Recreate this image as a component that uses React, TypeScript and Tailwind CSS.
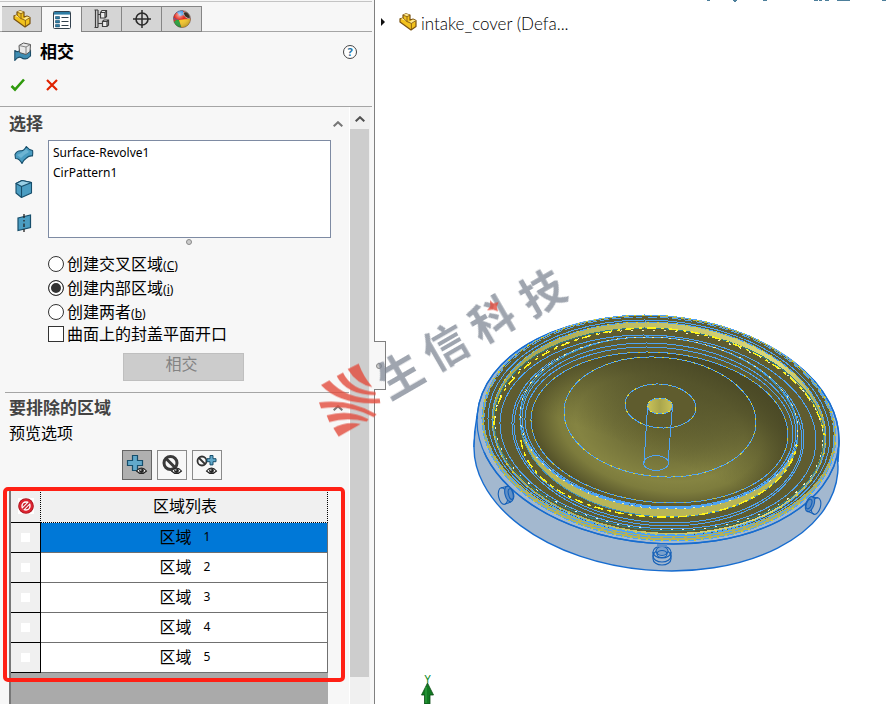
import React, { useState } from "react";

type IconProps = { className?: string };

const PartIcon = ({ className = "h-[18px] w-[18px]" }: IconProps) => (
  <svg viewBox="0 0 18 18" className={className} aria-hidden="true">
    <path d="M4 5 L4 2 L7 0.8 L11 2 L11 7 L14 6 L17 7.5 L17 13.5 L12 17 L1 9 L1 5.8 Z" fill="#f2c21d" stroke="#7a5210" strokeWidth="1.2" strokeLinejoin="round" />
    <path d="M4 2 L7 0.8 L11 2 L8 3.4 Z M10 9 L14 6.4 L17 7.6 L12.6 10.4 Z M1.5 6 L4 5 L8 8 Z" fill="#ffe98e" />
    <path d="M4 2.2 L8 3.6 L8 8.6 L10 9.4 L12.4 10.4 L12.4 16 M8 3.6 L11 2.2 M12.4 10.4 L16.6 7.8 M4 5 L8 8.6" fill="none" stroke="#7a5210" strokeWidth="0.8" />
  </svg>
);

const ListIcon = () => (
  <svg viewBox="0 0 18 18" className="h-[18px] w-[18px]" aria-hidden="true">
    <rect x="0.5" y="0.5" width="17" height="17" rx="1" fill="#fff" stroke="#33424e" />
    <path d="M1 1h16v2.6H1z" fill="#2e7da5" />
    <path d="M2.5 5.5h4v2.4h-4zM2.5 9.5h4v2.4h-4zM2.5 13.5h4v2.4h-4z" fill="#2e7da5" stroke="#1e4e69" strokeWidth="0.6" />
    <path d="M8.5 6.5h7M8.5 10.5h7M8.5 14.5h7" stroke="#33424e" strokeWidth="1.2" />
  </svg>
);

const TreeIcon = () => (
  <svg viewBox="0 0 18 20" className="h-5 w-[18px]" fill="none" stroke="#3f3f3f" strokeWidth="1.2" aria-hidden="true">
    <path d="M2.5 1 V18.5 M5 1 V18.5 M5 5.5 H8 M5 14.5 H9 M1.5 1 H5 M1.5 18.5 H5" />
    <path d="M7.5 3.5 L9 1.5 H13.5 V7.5 L12 9 H7.5 Z M7.5 3.5 H12 V9 M12 3.5 L13.5 1.5" fill="#eee" />
    <path d="M9.5 12.5 L11 11 H15.5 V16 L14 17.5 H9.5 Z M9.5 12.5 H14 V17.5 M14 12.5 L15.5 11" fill="#eee" />
  </svg>
);

const TargetIcon = () => (
  <svg viewBox="0 0 18 18" className="h-[18px] w-[18px]" fill="none" stroke="#2b2b2b" aria-hidden="true">
    <circle cx="9" cy="9" r="6" strokeWidth="1.6" />
    <path d="M9 0V18M0 9H18" strokeWidth="1.5" />
  </svg>
);

const AppearanceIcon = () => (
  <svg viewBox="0 0 18 18" className="h-[18px] w-[18px]" aria-hidden="true">
    <defs>
      <radialGradient id="gloss" cx="0.35" cy="0.25" r="0.8">
        <stop offset="0" stopColor="#fff" stopOpacity="0.65" />
        <stop offset="0.4" stopColor="#fff" stopOpacity="0" />
        <stop offset="1" stopColor="#000" stopOpacity="0.25" />
      </radialGradient>
    </defs>
    <circle cx="9" cy="9" r="8.6" fill="#e42a1d" />
    <path d="M0.4 9 A8.6 8.6 0 0 1 8 0.5 Q5 5 6 10 Z" fill="#2d6fd8" />
    <path d="M1 12 Q3 9 6 10 L8.5 17.5 A8.6 8.6 0 0 1 1 12Z" fill="#28a13c" />
    <path d="M6 10 Q12 9 17.6 9 A8.6 8.6 0 0 1 8.5 17.5 Z" fill="#f5c72b" />
    <path d="M6 10 L0.6 8 Q1 4 4 2 Q6 5 10 7 Z" fill="#e42a1d" />
    <path d="M4 2 A8.6 8.6 0 0 1 10 0.5 L11 5 L7 6 Z" fill="#2f8ae0" />
    <path d="M10 3 Q12 1 14 2 Q17.5 5 17.5 8 L15 8.5 Q11 7 10 3Z" fill="#35291d" stroke="#eee" strokeWidth="0.6" />
    <circle cx="9" cy="9" r="8.6" fill="url(#gloss)" stroke="#555" strokeWidth="0.4" />
  </svg>
);

const IntersectIcon = () => (
  <svg viewBox="0 0 18 20" className="h-5 w-[18px]" strokeLinejoin="round" aria-hidden="true">
    <path d="M0.8 8.5 Q4 11 6 8 L6 7 L16.5 8 V14 Q12 19 7 15.500 Q4 14 0.8 18.5Z" fill="#3f8db3" stroke="#1c4e69" strokeWidth="1.1" />
    <path d="M5 3.5 L9.5 1 L16.500 2.5 L16 9.5 L12 12.5 L5.5 10.5 Z" fill="#e9e9e9" stroke="#555" strokeWidth="1" />
    <path d="M5 3.5 L12 5 L16.500 2.5 M12 5 V12.5" fill="none" stroke="#777" strokeWidth="0.9" />
  </svg>
);

const SurfaceIcon = () => (
  <svg viewBox="0 0 20 20" className="h-5 w-5" aria-hidden="true">
    <path d="M1 9.5 Q3 5.500 7 5.800 Q10 6 12.3 1.5 Q15 5 18.6 5.5 Q19 8.5 18.5 11 Q15 10.500 12.500 13 Q9.500 15 8 18.5 Q5.5 13.5 1.5 13.5 Z" fill="#4b9dc2" stroke="#174e6b" strokeWidth="1.1" strokeLinejoin="round" />
    <path d="M3 10 Q8 8 12 4 L15 7 Q11 9 7 13 Z" fill="#83c3de" opacity="0.6" />
  </svg>
);

const BodyIcon = () => (
  <svg viewBox="0 0 20 20" className="h-5 w-5" stroke="#174e6b" strokeWidth="1.1" strokeLinejoin="round" aria-hidden="true">
    <path d="M2 4.5 L8 1.5 L17.5 3.5 V14 L7.5 18.5 L2 14Z" fill="#4b9dc2" />
    <path d="M2 4.5 L8 1.5 L17.5 3.5 L7.5 7.5Z" fill="#9ad0e6" />
    <path d="M7.5 7.5 V18.5" />
  </svg>
);

const PlaneIcon = () => (
  <svg viewBox="0 0 20 20" className="h-5 w-5" aria-hidden="true">
    <path d="M4 5 L16.5 2 V14.5 L4 17.5Z" fill="#4b9dc2" stroke="#174e6b" strokeWidth="1.2" />
    <path d="M10 1V5M10 7V8.5M10 10.5V14M10 16V19" stroke="#222" strokeWidth="1.3" />
  </svg>
);

const Eye = ({ x, y }: { x: number; y: number }) => (
  <g transform={`translate(${x} ${y})`}>
    <path d="M0.5 4 Q5.5 -2 10.5 4 Q5.5 9 0.5 4Z" fill="#fff" stroke="#222" strokeWidth="1.1" />
    <circle cx="5.5" cy="3.7" r="2.4" fill="#222" />
    <circle cx="4.8" cy="3" r="0.7" fill="#fff" />
  </g>
);

const PlusEyeIcon = () => (
  <svg viewBox="0 0 22 22" className="h-[22px] w-[22px]" aria-hidden="true">
    <path d="M6.5 1.5h5v5h5v5h-5v5h-5v-5h-5v-5h5z" fill="#62a9cb" stroke="#174e6b" strokeWidth="1.2" />
    <Eye x={10} y={13} />
  </svg>
);

const BlockEyeIcon = () => (
  <svg viewBox="0 0 22 22" className="h-[22px] w-[22px]" aria-hidden="true">
    <circle cx="9.5" cy="9" r="6.5" fill="none" stroke="#3a3a3a" strokeWidth="3" />
    <path d="M5 4.5L14 13.5" stroke="#3a3a3a" strokeWidth="3" />
    <Eye x={10} y={13} />
  </svg>
);

const BothEyeIcon = () => (
  <svg viewBox="0 0 22 22" className="h-[22px] w-[22px]" aria-hidden="true">
    <circle cx="6" cy="7" r="4.5" fill="none" stroke="#333" strokeWidth="1.8" />
    <path d="M3 4L9 10" stroke="#333" strokeWidth="1.8" />
    <path d="M14 1.5h3v3.200h3v3h-3v3.200h-3v-3.200h-3v-3h3z" fill="#62a9cb" stroke="#174e6b" strokeWidth="1" />
    <Eye x={10} y={13} />
  </svg>
);

const ForbidIcon = () => (
  <svg viewBox="0 0 16 16" className="h-4 w-4 bg-white" aria-hidden="true">
    <circle cx="8" cy="8" r="7.8" fill="#a5121b" />
    <circle cx="8" cy="8" r="7" fill="#dc2430" />
    <circle cx="8" cy="8" r="4.700" fill="#fff" />
    <circle cx="8" cy="8" r="3.300" fill="#c81e29" />
    <path d="M4.800 11.200L11.200 4.800" stroke="#fff" strokeWidth="3.600" />
    <path d="M4.500 11.500L11.500 4.500" stroke="#c81e29" strokeWidth="1.600" />
  </svg>
);

const Caret = ({ color = "#777" }: { color?: string }) => (
  <svg viewBox="0 0 10 6" className="h-[6px] w-[10px]" aria-hidden="true">
    <path d="M0.700 5.300L5 1.200L9.300 5.300" fill="none" stroke={color} strokeWidth="2" />
  </svg>
);

const TILT = 5;

/** Ellipse described by the edges of its bounding box, with the common tilt of the model. */
function Ring({
  box,
  ...rest
}: { box: [number, number, number, number] } & React.SVGProps<SVGEllipseElement>) {
  const [left, right, top, bottom] = box;
  const cx = (left + right) / 2;
  const cy = (top + bottom) / 2;
  const w = ((right - left) / 2) ** 2;
  const h = ((bottom - top) / 2) ** 2;
  const c = Math.cos((TILT * Math.PI) / 180) ** 2;
  const s = 1 - c;
  const rx = Math.sqrt((w * c - h * s) / (c - s));
  const ry = Math.sqrt((h * c - w * s) / (c - s));
  return <ellipse cx={cx} cy={cy} rx={rx} ry={ry} transform={`rotate(${TILT} ${cx} ${cy})`} {...rest} />;
}

const EDGE = "#4da3f5";

function Model() {
  return (
    <svg viewBox="375 0 511 704" preserveAspectRatio="xMinYMin meet" className="absolute inset-0 h-full w-full" fill="none" role="img" aria-label="intake_cover">
      <defs>
        <radialGradient id="dish" gradientUnits="userSpaceOnUse" cx="0" cy="0" r="1" gradientTransform="translate(660 428) rotate(6) scale(131 80)">
          <stop offset="0" stopColor="#6b6932" />
          <stop offset="0.35" stopColor="#74733a" />
          <stop offset="0.65" stopColor="#858442" />
          <stop offset="0.78" stopColor="#7d7c3d" />
          <stop offset="1" stopColor="#56542a" />
        </radialGradient>
        <linearGradient id="shade" gradientUnits="userSpaceOnUse" x1="685" y1="350" x2="655" y2="455">
          <stop offset="0" stopColor="#4a4926" />
          <stop offset="0.35" stopColor="#4a4926" stopOpacity="0.75" />
          <stop offset="1" stopColor="#4a4926" stopOpacity="0" />
        </linearGradient>
        <linearGradient id="lip" x1="0" x2="1">
          <stop offset="0" stopColor="#a5a24a" />
          <stop offset="0.5" stopColor="#c6c36a" />
          <stop offset="0.85" stopColor="#dcd97c" />
          <stop offset="1" stopColor="#a5a24a" />
        </linearGradient>
        <linearGradient id="hub" x1="0" x2="1">
          <stop offset="0" stopColor="#c9c25a" />
          <stop offset="0.5" stopColor="#aaa64c" />
          <stop offset="1" stopColor="#c9c25a" />
        </linearGradient>
      </defs>

      <path d="M707 0h3M733 0h4M734 1h2M763 0h4M814 0h4M819 0h3M825 0h4M837 0h13M882 0h4" stroke="#4d7f9b" strokeWidth="2" />

      <Ring box={[474, 838, 343, 571]} fill="#a3b8cf" stroke="#176ccf" strokeWidth="1.4" />
      <Ring box={[477, 839, 316, 544]} fill="#a3b8cf" stroke="#176ccf" strokeWidth="1.4" />
      <path d="M477 419L474 446L480 452L835 452L838 446L839 440Z" fill="#a3b8cf" />
      <path d="M477 416Q474 432 474 447M839 440Q839 450 838 462" stroke="#176ccf" strokeWidth="1.4" />
      <Ring box={[477, 839, 316, 544]} stroke="#176ccf" strokeWidth="1.2" />

      <g shapeRendering="crispEdges">
        <Ring box={[482, 836, 315, 541]} fill="#b4b158" />
        <Ring box={[484, 834, 316, 536]} fill="#5f5c30" />
        <Ring box={[482, 836, 315, 541]} stroke={EDGE} strokeWidth="1" />
        <Ring box={[482, 836, 315, 541]} stroke="#d0ce2a" strokeWidth="1" strokeDasharray="2 6" />
        <Ring box={[484, 834, 317, 538]} stroke={EDGE} strokeWidth="1" strokeDasharray="9 3" />
        <Ring box={[488, 830, 320, 536]} stroke={EDGE} strokeWidth="1" />

        <Ring box={[492, 826, 322, 535]} fill="url(#lip)" />
        <Ring box={[494, 823, 328, 533]} fill="#5f5c30" />
        <Ring box={[492, 826, 322, 535]} stroke={EDGE} strokeWidth="1" />
        <Ring box={[492, 826, 322, 535]} stroke="#d5d33c" strokeWidth="1" strokeDasharray="2 8" />
        <Ring box={[494, 824, 328, 531]} stroke="#2c7c8a" strokeWidth="1" />
        <path d="M494 425C496 365 575 328 650 328C740 329 817 380 824 435" stroke="#fff41a" strokeWidth="1.500" strokeDasharray="9 5 3 5" />
        <Ring box={[495, 823, 330, 530]} stroke="#f3f2c9" strokeWidth="1" strokeDasharray="2 9" />
        <Ring box={[500, 816, 335, 529]} stroke={EDGE} strokeWidth="1" />
        <Ring box={[512, 804, 337, 526]} stroke={EDGE} strokeWidth="1" />
        <Ring box={[514, 802, 342, 523]} stroke={EDGE} strokeWidth="1" />

        <Ring box={[520, 798, 337, 517]} fill="#b8b558" />
        <Ring box={[519, 799, 336, 509]} fill="#5f5c30" />
        <Ring box={[520, 798, 337, 517]} stroke="#3f95c0" strokeWidth="1" />
        <path d="M521 440C526 485 590 516 660 517C736 519 790 485 797 445" stroke="#fff41a" strokeWidth="1.5" strokeDasharray="9 4 4 4" />
        <Ring box={[520, 798, 337, 509]} stroke={EDGE} strokeWidth="1" />
        <Ring box={[520, 798, 337, 509]} stroke="#f3f2ae" strokeWidth="1" strokeDasharray="2 7" />
        <Ring box={[522, 796, 343, 508]} stroke={EDGE} strokeWidth="1" />
        <Ring box={[525, 793, 347, 507]} stroke={EDGE} strokeWidth="1" />
      </g>

      <Ring box={[531, 788, 352, 503]} fill="url(#dish)" />
      <Ring box={[531, 788, 352, 503]} fill="url(#shade)" />
      <g shapeRendering="crispEdges">
        <Ring box={[531, 788, 352, 503]} stroke={EDGE} strokeWidth="1" />
        <Ring box={[531, 788, 352, 503]} stroke="#c6c43a" strokeWidth="1" strokeDasharray="2 8" />
        <Ring box={[564, 756, 357, 477]} stroke={EDGE} strokeWidth="1" />
        <Ring box={[564, 756, 357, 477]} stroke="#d5d33c" strokeWidth="1" strokeDasharray="2 6" />
        <Ring box={[625, 696, 384, 428]} fill="#5f5c2e" stroke={EDGE} strokeWidth="1" />
        <Ring box={[625, 696, 384, 428]} stroke="#d5d33c" strokeWidth="1" strokeDasharray="2 7" />
        <ellipse cx="660" cy="406" rx="12.500" ry="8" fill="url(#hub)" stroke={EDGE} />
        <ellipse cx="660" cy="406" rx="12.500" ry="8" stroke="#f0ee30" strokeDasharray="2 4" />
        <path d="M647.500 407L644 463M672.500 406L668 463" stroke={EDGE} />
        <ellipse cx="656" cy="463" rx="12.500" ry="7.500" stroke={EDGE} />
      </g>

      <g stroke="#1560b8" strokeWidth="1.1">
        <ellipse cx="503" cy="496" rx="4.500" ry="8.500" transform="rotate(-12 503 496)" />
        <ellipse cx="509" cy="494" rx="4" ry="8" fill="#5f8fc6" transform="rotate(-14 509 494)" />
        <ellipse cx="511" cy="494" rx="2.500" ry="5.500" transform="rotate(-14 511 494)" />
        <path d="M501 488L508 486M505 504L511 502" />
        <ellipse cx="816" cy="506" rx="4.500" ry="8.500" transform="rotate(14 816 506)" />
        <ellipse cx="810" cy="504" rx="4" ry="8" fill="#5f8fc6" transform="rotate(20 810 504)" />
        <ellipse cx="809" cy="504" rx="2.500" ry="5" transform="rotate(20 809 504)" />
        <path d="M812 497L818 498M807 511L814 514" />
        <path d="M653 552V559A9 6 0 0 0 671 559V552" />
        <ellipse cx="662" cy="552" rx="9" ry="6" />
        <ellipse cx="662" cy="556" rx="9" ry="6" />
        <ellipse cx="662" cy="551" rx="6" ry="4.500" fill="#7ba1cc" />
        <ellipse cx="662" cy="554" rx="5" ry="3.500" />
        <path d="M657 544H667V547H657Z" fill="#5f8fc6" stroke="none" />
      </g>

      <path d="M427.500 683L433.500 695H430V704H424.500V695H421.500Z" fill="#127a22" stroke="#0b4d14" strokeWidth="0.800" />
      <path d="M426 687V703" stroke="#35a845" />
      <text x="427.500" y="683" textAnchor="middle" fontSize="11" className="fill-[#0f8a1f] font-['Noto_Sans',sans-serif]">Y</text>
    </svg>
  );
}

function Watermark() {
  const glyphs: [string, number, number][] = [
    ["生", 270, 374],
    ["信", 406, 290],
    ["科", 546, 208],
    ["技", 697, 128],
  ];
  return (
    <svg viewBox="0 0 810 600" className="pointer-events-none absolute left-[310px] top-[250px] h-[200px] w-[270px]" aria-hidden="true">
      <g className="fill-[#7f8794] font-['Noto_Sans_CJK_SC',sans-serif] font-bold" opacity="0.75" fontSize="132">
        {glyphs.map(([ch, x, y]) => (
          <text key={ch} textAnchor="middle" dy="50" transform={`translate(${x} ${y}) rotate(-30)`}>
            {ch}
          </text>
        ))}
      </g>
      <g fill="#e34c3c" opacity="0.8">
        <path d="M113 357L146 341Q160 380 187 411Q140 402 113 357Z" />
        <path d="M80 378L99 368Q125 422 197 426V435Q110 435 80 378Z" />
        <path d="M33 405L58 391Q110 450 209 446L211 459Q90 466 33 405Z" />
        <path d="M27 457Q120 445 200 493L191 501Q120 462 33 475Z" />
        <path d="M50 496Q120 476 176 508L170 515Q110 500 58 516Z" />
        <path d="M70 534Q110 512 152 522L86 560Z" />
        <path d="M540 151L550 160L566 156L560 170L564 184L549 179L531 181L541 169Z" />
      </g>
    </svg>
  );
}

const tabs = [
  { label: "FeatureManager", icon: <PartIcon /> },
  { label: "PropertyManager", icon: <ListIcon /> },
  { label: "ConfigurationManager", icon: <TreeIcon /> },
  { label: "DimXpertManager", icon: <TargetIcon /> },
  { label: "DisplayManager", icon: <AppearanceIcon /> },
];

const modes = [
  { id: "cross", text: "创建交叉区域", hotkey: "C" },
  { id: "inner", text: "创建内部区域", hotkey: "i" },
  { id: "both", text: "创建两者", hotkey: "b" },
];

const previews = [
  { label: "显示包含的区域", icon: <PlusEyeIcon /> },
  { label: "显示排除的区域", icon: <BlockEyeIcon /> },
  { label: "显示两者", icon: <BothEyeIcon /> },
];

export default function App() {
  const [tab, setTab] = useState(1);
  const [mode, setMode] = useState("inner");
  const [preview, setPreview] = useState(0);
  const [row, setRow] = useState(1);

  return (
    <div className="relative flex h-screen overflow-hidden bg-white font-['Noto_Sans','Noto_Sans_CJK_SC',sans-serif] text-base text-black">
      <aside className="flex w-[375px] shrink-0 flex-col border-r border-[#808080] bg-[#f7f7f7]">
        <div className="mr-[2px] h-[2px] shrink-0 border-b border-[#c4c4c4]" />
        <div className="mr-[2px] flex h-[30px] shrink-0 items-end">
          <span className="h-full w-[2px] border-b border-[#a5a5a5]" />
          {tabs.map((t, i) => (
            <button
              key={t.label}
              aria-label={t.label}
              onClick={() => setTab(i)}
              className={`flex h-[26px] w-10 items-center justify-center border-t border-r border-[#858585] ${
                i === tab ? "bg-[#f7f7f7]" : "border-b bg-[#d5d5d5]"
              }`}
            >
              {t.icon}
            </button>
          ))}
          <span className="h-full flex-1 border-b border-[#a5a5a5]" />
        </div>

        <header className="mr-[2px] h-[75px] shrink-0 border-b border-[#a5a5a5]">
          <div className="flex h-10 items-center pl-[14px] pr-[15px]">
            <IntersectIcon />
            <h1 className="ml-2 flex-1 text-[17px] leading-5 font-bold">相交</h1>
            <button aria-label="帮助" className="flex h-[14px] w-[14px] items-center justify-center rounded-full border border-[#444] bg-white text-[11px] leading-3 font-bold text-[#1f74a5]">
              ?
            </button>
          </div>
          <div className="flex h-[26px] items-center gap-5 pl-[10px]">
            <button aria-label="确定">
              <svg viewBox="0 0 16 14" className="h-[14px] w-4">
                <path d="M1.500 8L5 11.500L14 1.500" fill="none" stroke="#2f9a0c" strokeWidth="2.600" />
              </svg>
            </button>
            <button aria-label="取消">
              <svg viewBox="0 0 12 12" className="h-3 w-3">
                <path d="M1 1L11 11M11 1L1 11" fill="none" stroke="#e02300" strokeWidth="2.200" />
              </svg>
            </button>
          </div>
        </header>

        <div className="flex min-h-0 flex-1">
          <div className="min-w-0 flex-1 overflow-hidden">
            <section>
              <button className="flex h-[33px] w-full items-center justify-between pl-[9px] pr-[6px]">
                <span className="text-[17px] leading-5 font-bold text-[#444]">选择</span>
                <Caret />
              </button>
              <div className="flex pr-[18px]">
                <div className="flex w-12 flex-col items-center gap-[14px] pt-[5px]">
                  <SurfaceIcon />
                  <BodyIcon />
                  <PlaneIcon />
                </div>
                <ul role="listbox" aria-label="选择" className="h-[98px] flex-1 border border-[#7e8ba3] bg-white px-1 py-[2px] text-xs leading-5">
                  <li role="option" aria-selected="false">Surface-Revolve1</li>
                  <li role="option" aria-selected="false">CirPattern1</li>
                </ul>
              </div>
              <div className="flex h-2 items-center justify-center pl-[28px]">
                <span className="h-[6px] w-[6px] rounded-full border border-[#8a8a8a] bg-[#ccc]" />
              </div>
              <div className="pt-[6px] pl-12">
                {modes.map((m) => (
                  <label key={m.id} className="flex h-6 items-center">
                    <input
                      type="radio"
                      name="mode"
                      checked={mode === m.id}
                      onChange={() => setMode(m.id)}
                      className="mr-[3px] h-4 w-4 appearance-none rounded-full border border-[#333] bg-white checked:bg-[#333] checked:shadow-[inset_0_0_0_2px_white]"
                    />
                    <span className="leading-6">
                      {m.text}
                      <span className="text-xs">
                        (<u>{m.hotkey}</u>)
                      </span>
                    </span>
                  </label>
                ))}
                <label className="flex h-5 items-center">
                  <input type="checkbox" className="mr-[3px] h-4 w-4 appearance-none border border-[#333] bg-white checked:bg-[#333]" />
                  <span className="leading-5">曲面上的封盖平面开口</span>
                </label>
              </div>
              <button disabled className="mt-[9px] ml-[123px] flex h-7 w-[121px] justify-center border border-[#bfbfbf] bg-[#ccc] pr-1 leading-5 text-[#838383]">
                相交
              </button>
            </section>

            <section className="mt-[11px] ml-[5px] border-t border-[#a5a5a5]">
              <button className="flex h-[30px] w-full items-center justify-between pl-1 pr-[6px]">
                <span className="text-[17px] leading-5 font-bold text-[#444]">要排除的区域</span>
                <Caret />
              </button>
              <p className="h-5 pl-1 leading-5">预览选项</p>
              <div className="mt-[7px] flex gap-[5px] pl-[117px]">
                {previews.map((p, i) => (
                  <button
                    key={p.label}
                    aria-label={p.label}
                    onClick={() => setPreview(i)}
                    className={`flex h-[30px] w-[30px] items-center justify-center border ${
                      i === preview ? "border-[#666] bg-[#b0b0b0]" : "border-[#8a8a8a] bg-[#f7f7f7]"
                    }`}
                  >
                    {p.icon}
                  </button>
                ))}
              </div>
              <div className="relative mt-[10px] mr-[21px] ml-1 h-[400px] border-l-2 border-[#777] bg-[#aaa]">
                <table className="w-full table-fixed border-separate border-spacing-0">
                  <thead>
                    <tr className="h-[33px]">
                      <th className="w-[30px] border-r border-b border-r-black border-b-black bg-[#f0f0f0] p-0 [border-right-style:dotted]">
                        <span className="flex justify-center">
                          <ForbidIcon />
                        </span>
                      </th>
                      <th className="border-r border-b border-dotted border-black bg-[#f0f0f0] p-0 pl-[2px] font-normal">区域列表</th>
                    </tr>
                  </thead>
                  <tbody>
                    {[1, 2, 3, 4, 5].map((n) => (
                      <tr key={n} className="h-[30px]" onClick={() => setRow(n)}>
                        <td className="border-r border-b border-black bg-[#f0f0f0] p-0">
                          <span className="flex justify-center">
                            <input type="checkbox" aria-label={`区域 ${n}`} className="h-[9px] w-[9px] appearance-none bg-white checked:bg-[#333]" />
                          </span>
                        </td>
                        <td className={`border-r border-b border-[#707070] p-0 pb-[2px] pl-[2px] ${row === n ? "bg-[#0078d7]" : "bg-white"}`}>
                          <span className="flex items-center justify-center gap-3 leading-6">
                            <span>区域</span>
                            <span className="text-xs">{n}</span>
                          </span>
                        </td>
                      </tr>
                    ))}
                  </tbody>
                </table>
                <div className="pointer-events-none absolute -top-[3px] -left-[8px] -right-[17px] h-[195px] rounded-[5px] border-4 border-[#ff2015]" />
              </div>
            </section>
          </div>

          <div className="mr-1 flex w-[21px] shrink-0 flex-col border-l border-white bg-[#f0f0f0] pt-px">
            <button aria-label="向上滚动" className="flex h-[21px] shrink-0 items-center justify-center">
              <Caret color="#505050" />
            </button>
            <div className="mr-px h-[92%] bg-[#cdcdcd]" />
          </div>
        </div>
      </aside>

      <main className="relative min-w-0 flex-1">
        <Model />
        <div className="relative flex h-12 items-center pl-[6px] font-['Lato',sans-serif]">
          <button aria-label="展开" className="mr-[14px] mb-1">
            <svg viewBox="0 0 4 8" className="h-2 w-1">
              <path d="M0 0L4 4L0 8Z" fill="#111" />
            </svg>
          </button>
          <PartIcon className="mb-1 h-[18px] w-[18px]" />
          <span className="ml-1 text-[17px] leading-6 font-light">intake_cover (Defa...</span>
        </div>
        <button aria-label="收起面板" className="absolute top-[341px] -left-px flex h-[49px] w-3 items-center justify-center border border-l-0 border-[#808080] bg-[#f7f7f7] pr-[2px]">
          <span className="h-[6px] w-[6px] rounded-full border border-[#888] bg-[#ccc]" />
        </button>
      </main>

      <Watermark />
    </div>
  );
}
